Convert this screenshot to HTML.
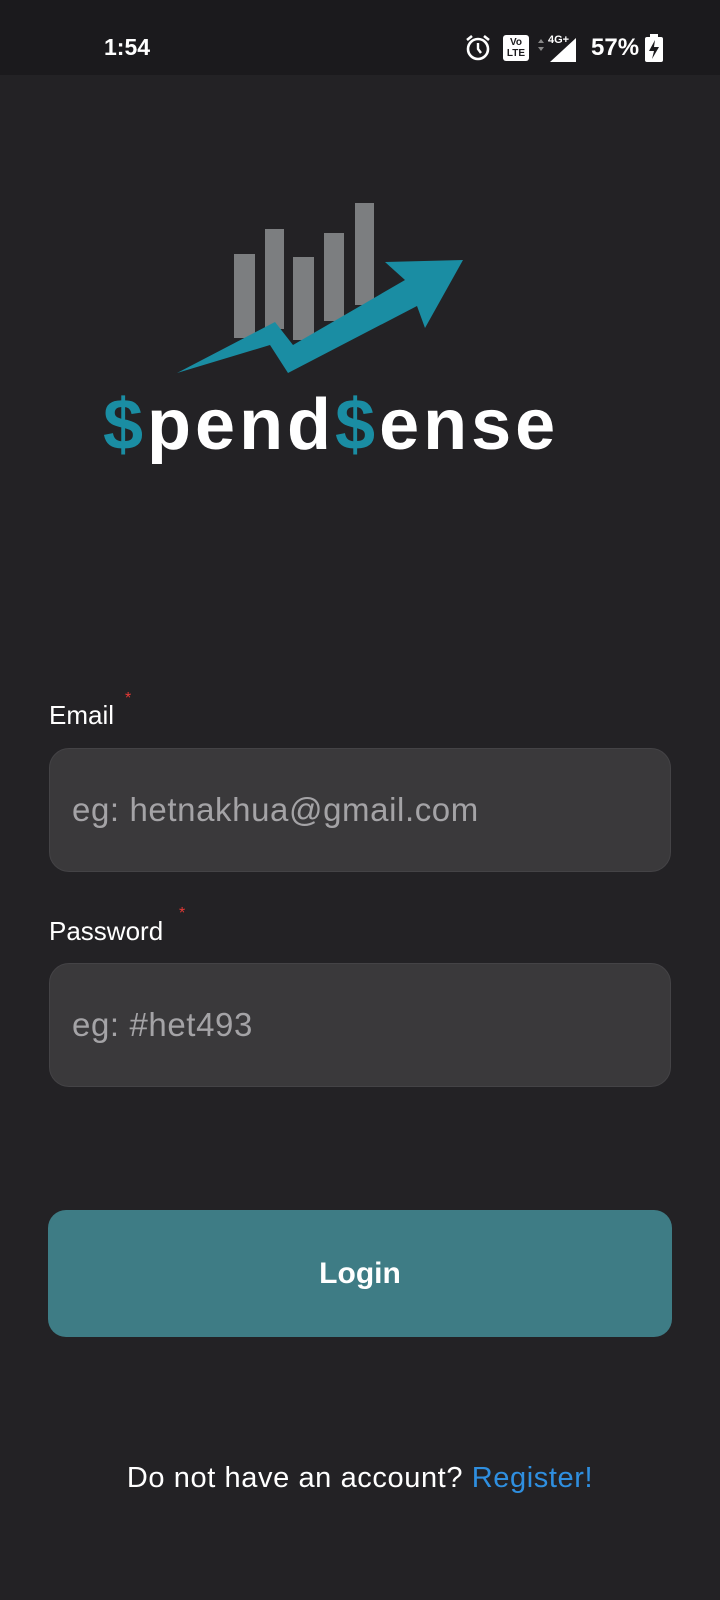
<!DOCTYPE html>
<html><head><meta charset="utf-8"><style>
*{margin:0;padding:0;box-sizing:border-box}
body{width:720px;height:1600px;background:#232225;font-family:"Liberation Sans",sans-serif;position:relative;overflow:hidden;color:#fff}
.sb{position:absolute;left:0;top:0;width:720px;height:75px;background:#1b1a1d}
.abs{position:absolute}
.lbl{font-size:26px;color:#fff}
.star{color:#e53935;font-size:16px;position:absolute}
.field{position:absolute;left:49px;width:622px;height:124px;background:#3a393b;border:1.5px solid #444346;border-radius:20px;font-size:33px;letter-spacing:0.6px;color:#a4a3a6;padding-left:22px;line-height:121px}
.btn{position:absolute;left:48px;top:1210px;width:624px;height:127px;background:#3e7c85;border-radius:18px;text-align:center;line-height:127px;font-size:30px;font-weight:bold}
</style></head><body>
<div class="sb">
 <div class="abs" style="left:104px;top:34px;font-size:23px;font-weight:bold">1:54</div>
 <svg class="abs" style="left:464px;top:33px" width="30" height="30" viewBox="0 0 30 30"><circle cx="14" cy="16" r="10" fill="none" stroke="#fff" stroke-width="2.6"/><path d="M14 10v6l3 4" stroke="#fff" stroke-width="2.4" fill="none"/><path d="M3 7l5-4M25 7l-5-4" stroke="#fff" stroke-width="2.6"/></svg>
 <div class="abs" style="left:503px;top:35px;width:26px;height:26px;background:#fff;border-radius:3px;color:#1b1a1d;font-size:10px;font-weight:bold;line-height:11px;text-align:center;padding-top:2px">Vo<br>LTE</div>
 <svg class="abs" style="left:536px;top:32px" width="42" height="30" viewBox="0 0 42 30"><path d="M2 11l3-4 3 4zM2 15l3 4 3-4z" fill="#888"/><path d="M40 30V6L14 30z" fill="#fff"/><text x="12" y="11" font-size="11" font-weight="bold" fill="#fff" font-family="Liberation Sans">4G+</text></svg>
 <div class="abs" style="left:591px;top:34px;font-size:24px;font-weight:bold">57%</div>
 <svg class="abs" style="left:644px;top:33px" width="20" height="30" viewBox="0 0 20 30"><rect x="6" y="1" width="8" height="4" fill="#fff"/><rect x="1" y="4" width="18" height="25" rx="2" fill="#fff"/><path d="M11 7l-6 11h5l-2 8 7-12h-5z" fill="#1b1a1d"/></svg>
</div>
<svg class="abs" style="left:0;top:190px" width="720" height="290" viewBox="0 190 720 290">
 <g fill="#7c7e80">
 <rect x="234" y="254" width="21" height="84"/><rect x="265" y="229" width="19" height="100"/><rect x="293" y="257" width="21" height="83"/><rect x="324" y="233" width="20" height="88"/><rect x="355" y="203" width="19" height="102"/>
 </g>
 <path d="M177 373L275 322L293 345L405 280L385 262L463 260L425 328L417 306L288 373L270 345Z" fill="#1a8da3"/>
 <text x="103" y="449" font-size="72" font-weight="bold" letter-spacing="4" fill="#fff" font-family="Liberation Sans"><tspan fill="#1a8da3">$</tspan>pend<tspan fill="#1a8da3">$</tspan>ense</text>
</svg>
<div class="abs lbl" style="left:49px;top:700px">Email</div><div class="star" style="left:125px;top:690px">*</div>
<div class="field" style="top:748px">eg: hetnakhua@gmail.com</div>
<div class="abs lbl" style="left:49px;top:916px">Password</div><div class="star" style="left:179px;top:905px">*</div>
<div class="field" style="top:963px">eg: #het493</div>
<div class="btn">Login</div>
<div class="abs" style="left:0;width:720px;top:1462px;text-align:center;font-size:29px;letter-spacing:0.6px">Do not have an account? <span style="color:#2f8fe0">Register!</span></div>
</body></html>
